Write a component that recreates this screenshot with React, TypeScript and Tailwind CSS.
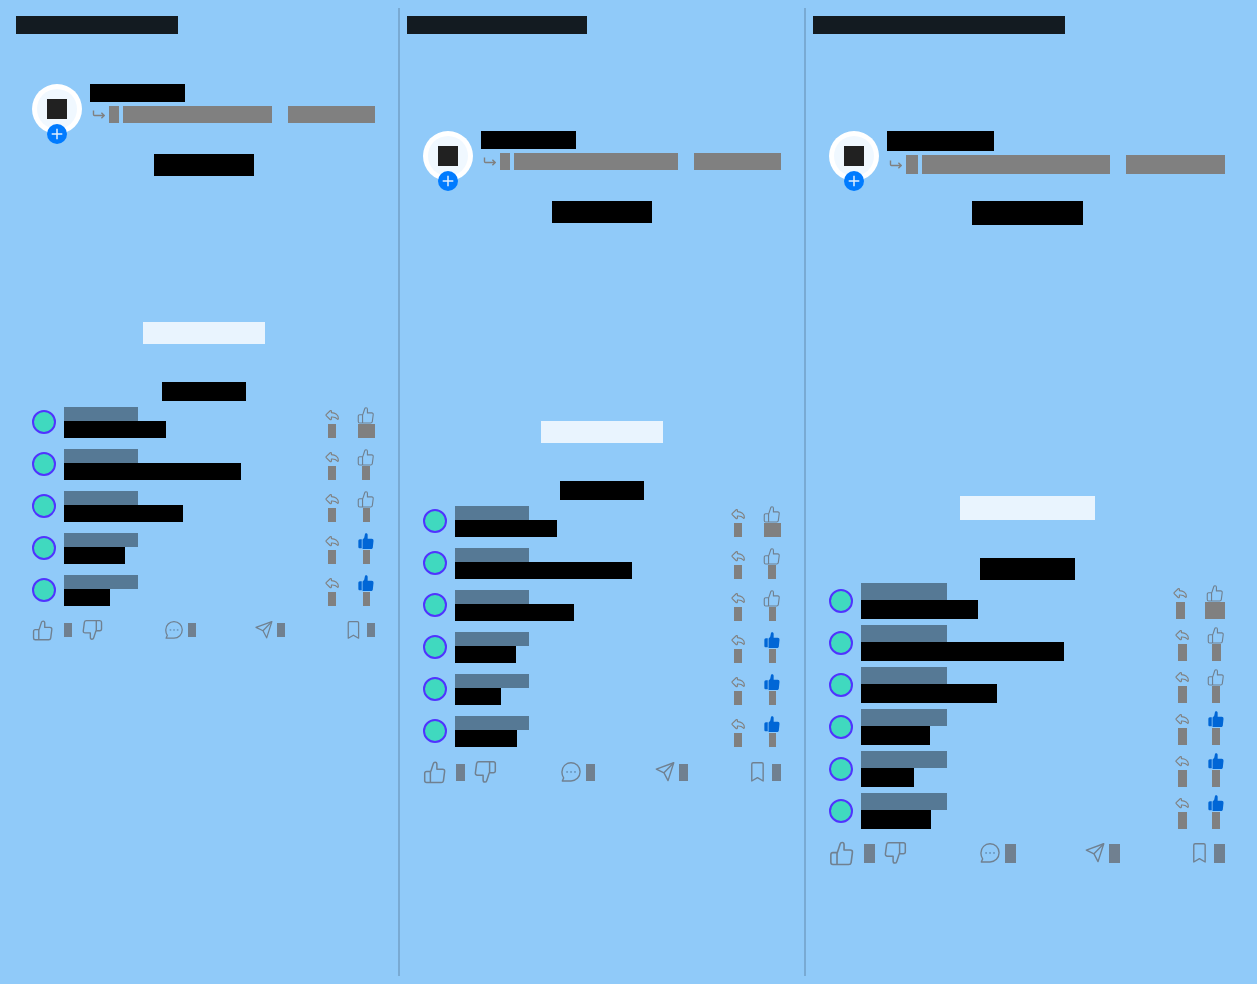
import React from 'react';
import clsx from 'clsx';

type Screen = {
  id: string;
  title: string;
  headerTop: string;
  name: string;
  sub: string;
  subShort: string;
  subLong: string;
  caption: string;
  action: string;
  section: string;
  commentName: string;
  comments: string[];
  replyCount: string;
  likeCounts: string[];
  footer: string;
  footerCount: string;
  footerGap: string;
  likeIcon: string;
  dislikeIcon: string;
  toolIcon: string;
};

const screens: Screen[] = [
  {
    id: 'small',
    title: 'w-[162px]',
    headerTop: 'mt-[50px]',
    name: 'w-[95px] h-[18px]',
    sub: 'h-[17px]',
    subShort: 'w-[10px]',
    subLong: 'w-[87px]',
    caption: 'w-[100px] h-[22px]',
    action: 'mt-[146px] w-[122px] h-[22px]',
    section: 'w-[84px] h-[19px]',
    commentName: 'w-[74px] h-[14px]',
    comments: ['w-[102px] h-[17px]', 'w-[177px] h-[17px]', 'w-[119px] h-[17px]', 'w-[61px] h-[17px]', 'w-[46px] h-[17px]'],
    replyCount: 'w-[8px] h-[14px]',
    likeCounts: ['w-[17px] h-[14px]', 'w-[8px] h-[14px]', 'w-[7px] h-[14px]', 'w-[7px] h-[14px]', 'w-[7px] h-[14px]'],
    footer: 'h-[38px]',
    footerCount: 'w-[8px] h-[14px]',
    footerGap: 'gap-[10px] pr-[2px]',
    likeIcon: 'size-[22px]',
    dislikeIcon: 'size-[22px]',
    toolIcon: 'size-[20px]',
  },
  {
    id: 'medium',
    title: 'w-[180px]',
    headerTop: 'mt-[97px]',
    name: 'w-[95px] h-[18px]',
    sub: 'h-[17px]',
    subShort: 'w-[10px]',
    subLong: 'w-[87px]',
    caption: 'w-[100px] h-[22px]',
    action: 'mt-[198px] w-[122px] h-[22px]',
    section: 'w-[84px] h-[19px]',
    commentName: 'w-[74px] h-[14px]',
    comments: ['w-[102px] h-[17px]', 'w-[177px] h-[17px]', 'w-[119px] h-[17px]', 'w-[61px] h-[17px]', 'w-[46px] h-[17px]', 'w-[62px] h-[17px]'],
    replyCount: 'w-[8px] h-[14px]',
    likeCounts: ['w-[17px] h-[14px]', 'w-[8px] h-[14px]', 'w-[7px] h-[14px]', 'w-[7px] h-[14px]', 'w-[7px] h-[14px]', 'w-[7px] h-[14px]'],
    footer: 'h-[40px]',
    footerCount: 'w-[9px] h-[17px]',
    footerGap: 'gap-[9px] pr-[4px]',
    likeIcon: 'size-[24px]',
    dislikeIcon: 'size-[24px]',
    toolIcon: 'size-[22px]',
  },
  {
    id: 'large',
    title: 'w-[252px]',
    headerTop: 'mt-[97px]',
    name: 'w-[107px] h-[20px]',
    sub: 'h-[19px]',
    subShort: 'w-[12px]',
    subLong: 'w-[99px]',
    caption: 'w-[111px] h-[24px]',
    action: 'mt-[271px] w-[135px] h-[24px]',
    section: 'w-[95px] h-[22px]',
    commentName: 'w-[86px] h-[17px]',
    comments: ['w-[117px] h-[19px]', 'w-[203px] h-[19px]', 'w-[136px] h-[19px]', 'w-[69px] h-[19px]', 'w-[53px] h-[19px]', 'w-[70px] h-[19px]'],
    replyCount: 'w-[9px] h-[17px]',
    likeCounts: ['w-[20px] h-[17px]', 'w-[9px] h-[17px]', 'w-[8px] h-[17px]', 'w-[8px] h-[17px]', 'w-[8px] h-[17px]', 'w-[8px] h-[17px]'],
    footer: 'h-[42px]',
    footerCount: 'w-[11px] h-[19px]',
    footerGap: 'gap-[9px] pr-[3px]',
    likeIcon: 'size-[26px]',
    dislikeIcon: 'size-[24px]',
    toolIcon: 'size-[22px]',
  },
];

function Bar({ className }: { className: string }) {
  return <span className={clsx('block shrink-0', className)} />;
}

type IconProps = { className?: string };

function ThumbIcon({ className, down = false }: IconProps & { down?: boolean }) {
  return (
    <svg viewBox="0 0 24 24" fill="none" stroke="currentColor" strokeWidth="1.5" strokeLinejoin="round" strokeLinecap="round" className={clsx('block', className)}>
      <path
        transform={down ? 'rotate(180 11.5 12.2)' : undefined}
        d="M7.4 11.6H3.6C2.4 11.6 1.7 12.4 1.7 13.5V20.6C1.7 21.8 2.5 22.6 3.6 22.6H18.2C19.4 22.6 20.2 21.9 20.4 20.8L21.6 11.6C21.8 10 21 9.2 19.6 9.2H13.9V4.4C13.9 3.1 13.2 2.3 12.1 2.3C11.2 2.3 10.6 2.8 10.3 3.7L8.2 10.2C7.9 11.2 7.4 11.5 7.4 12.6V22.4"
      />
    </svg>
  );
}

function ThumbSolidIcon({ className }: IconProps) {
  return (
    <svg viewBox="0 0 24 24" fill="currentColor" className={clsx('block', className)}>
      <path d="M6.3 9.8H3.8C2.6 9.8 1.8 10.8 1.8 12V19.6C1.8 20.9 2.6 21.8 3.9 21.8H6.3Z" />
      <path d="M7.4 22.6H18.8C20.1 22.6 20.9 21.9 21.1 20.6L22 11.9C22.1 10.2 21.3 9 19.6 9H14.2V3.7C14.2 2.5 13.4 1.7 12.3 1.7C11.3 1.7 10.6 2.3 10.5 3.3L9.7 7.3C9.4 8.6 7.4 9 7.4 10.4Z" />
    </svg>
  );
}

function ReplyIcon({ className }: IconProps) {
  return (
    <svg viewBox="0 0 24 24" fill="none" stroke="currentColor" strokeWidth="1.5" strokeLinejoin="round" className={clsx('block', className)}>
      <path d="M4.2 11.6L9.6 6.3C10.3 5.7 11.2 6.1 11.2 7V8.8C16.5 8.9 20.4 11.9 20.5 16.6C20.5 18 19.6 18.1 18.9 17.1C17.3 15.1 14.6 14.5 11.2 14.7V17.3C11.2 18.5 10.2 18.7 9.5 18L4.2 12.8C3.8 12.4 3.8 12 4.2 11.6Z" />
    </svg>
  );
}

function CommentIcon({ className }: IconProps) {
  return (
    <svg viewBox="0 0 24 24" fill="none" stroke="currentColor" strokeWidth="1.5" strokeLinejoin="round" className={clsx('block', className)}>
      <path d="M2.5 21.8L4 18.4C2.8 16.7 2.1 14.4 2.1 11.9C2.1 6.2 6.5 1.9 12 1.9S21.9 6.2 21.9 11.8S17.4 21.8 12 21.8Z" />
      <g fill="#6b98bf" stroke="none">
        <rect x="6.8" y="11" width="1.9" height="1.9" />
        <rect x="11.1" y="11" width="1.9" height="1.9" />
        <rect x="15.4" y="11" width="1.9" height="1.9" />
      </g>
    </svg>
  );
}

function SendIcon({ className }: IconProps) {
  return (
    <svg viewBox="0 0 24 24" fill="none" stroke="currentColor" strokeWidth="1.5" strokeLinejoin="round" className={clsx('block', className)}>
      <path d="M22.6 1.9L3.6 8.8L12 12.9L16.4 21.4Z" />
      <path d="M22.6 1.9L12 12.9" />
    </svg>
  );
}

function BookmarkIcon({ className }: IconProps) {
  return (
    <svg viewBox="0 0 24 24" fill="none" stroke="currentColor" strokeWidth="1.5" strokeLinejoin="round" className={clsx('block', className)}>
      <path d="M6.3 3.3C6.3 2.4 6.9 1.9 7.8 1.9H17.2C18.1 1.9 18.7 2.4 18.7 3.3V21.8L12.5 18.2L6.3 21.8Z" />
    </svg>
  );
}

function RepostArrow() {
  return (
    <svg viewBox="0 0 15 17" fill="none" stroke="#808080" strokeWidth="1.4" className="block h-[17px] w-[15px] shrink-0">
      <path d="M3.5 4.5V8.4C3.5 9 3.8 9.5 4.5 9.5H14.2M11.4 6.7L14.3 9.5L11.4 12.3" />
    </svg>
  );
}

function ProfileHeader({ s }: { s: Screen }) {
  return (
    <header className={clsx('flex h-[50px] gap-2', s.headerTop)}>
      <div className="relative flex size-[50px] shrink-0 items-center justify-center rounded-full bg-white">
        <div className="flex size-10 items-center justify-center rounded-full bg-[#f0f8ff]">
          <Bar className="size-5 bg-[#212121]" />
        </div>
        <button type="button" aria-label="Follow" className="absolute -bottom-2.5 left-[15px] flex size-5 items-center justify-center rounded-full bg-[#007bff]">
          <svg viewBox="0 0 20 20" stroke="#e0efff" strokeWidth="1.5" className="block size-5">
            <path d="M10 4.7V15.3M4.7 10H15.3" />
          </svg>
        </button>
      </div>
      <div className="flex min-w-0 flex-1 flex-col gap-1">
        <Bar className={clsx('bg-black', s.name)} />
        <div className="flex items-center gap-1">
          <RepostArrow />
          <Bar className={clsx('bg-[#808080]', s.sub, s.subShort)} />
          <span className={clsx('mr-3 block min-w-0 flex-1 bg-[#808080]', s.sub)} />
          <Bar className={clsx('bg-[#808080]', s.sub, s.subLong)} />
        </div>
      </div>
    </header>
  );
}

function CommentRow({ s, index }: { s: Screen; index: number }) {
  const liked = index > 2;
  return (
    <li className="flex h-[42px] items-center">
      <span className="size-6 shrink-0 rounded-full border-2 border-[#5033ff] bg-[#40d9bf]" />
      <div className="ml-2 min-w-0 flex-1">
        <Bar className={clsx('bg-[#567995]', s.commentName)} />
        <Bar className={clsx('bg-black', s.comments[index])} />
      </div>
      <div className="flex gap-4">
        <button type="button" aria-label="Reply" className="flex flex-col items-center text-[#808080]">
          <ReplyIcon className="size-[18px]" />
          <Bar className={clsx('bg-[#808080]', s.replyCount)} />
        </button>
        <button type="button" aria-label="Like comment" aria-pressed={liked} className="flex flex-col items-center">
          {liked ? <ThumbSolidIcon className="size-[18px] text-[#0066d6]" /> : <ThumbIcon className="size-[18px] text-[#708090]" />}
          <Bar className={clsx('bg-[#808080]', s.likeCounts[index])} />
        </button>
      </div>
    </li>
  );
}

function ActionBar({ s }: { s: Screen }) {
  const count = <Bar className={clsx('bg-[#708090]', s.footerCount)} />;
  return (
    <footer className={clsx('flex items-center justify-between text-[#708090]', s.footer)}>
      <div className={clsx('flex items-center', s.footerGap)}>
        <button type="button" aria-label="Like">
          <ThumbIcon className={s.likeIcon} />
        </button>
        {count}
        <button type="button" aria-label="Dislike">
          <ThumbIcon down className={s.dislikeIcon} />
        </button>
      </div>
      <button type="button" aria-label="Comment" className="flex items-center gap-1">
        <CommentIcon className={s.toolIcon} />
        {count}
      </button>
      <button type="button" aria-label="Share" className="flex items-center gap-1">
        <SendIcon className={s.toolIcon} />
        {count}
      </button>
      <button type="button" aria-label="Save" className="flex items-center gap-1">
        <BookmarkIcon className={s.toolIcon} />
        {count}
      </button>
    </footer>
  );
}

function DeviceScreen({ s }: { s: Screen }) {
  return (
    <section className="min-w-0 pt-2">
      <Bar className={clsx('h-[18px] bg-[#131b21]', s.title)} />
      <div className="px-4">
        <ProfileHeader s={s} />
        <div className="flex flex-col items-center pt-5">
          <Bar className={clsx('bg-black', s.caption)} />
          <Bar className={clsx('bg-[#e9f4fe]', s.action)} />
          <Bar className={clsx('mt-[38px] bg-black', s.section)} />
        </div>
        <ul>
          {s.comments.map((_, i) => (
            <CommentRow key={i} s={s} index={i} />
          ))}
        </ul>
        <ActionBar s={s} />
      </div>
    </section>
  );
}

export default function App() {
  return (
    <main className="grid min-h-screen grid-cols-[375fr_2px_390fr_2px_428fr] gap-x-[7px] bg-[#90caf9] px-4 py-2">
      {screens.map((s, i) => (
        <React.Fragment key={s.id}>
          {i > 0 && <div className="bg-[#79aad3]" />}
          <DeviceScreen s={s} />
        </React.Fragment>
      ))}
    </main>
  );
}
